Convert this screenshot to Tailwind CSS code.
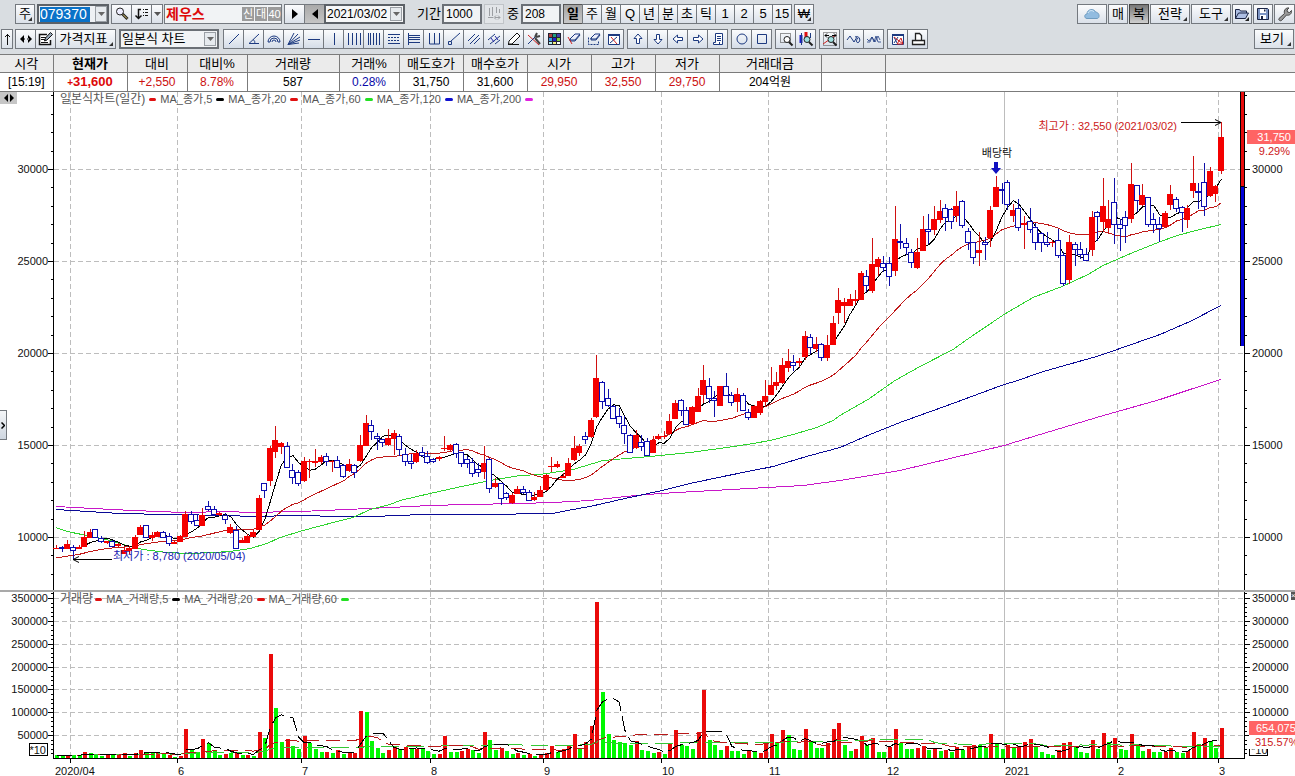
<!DOCTYPE html>
<html lang="ko">
<head>
  <meta charset="UTF-8">
  <meta name="viewport" content="width=device-width, initial-scale=1.0">
  <title>제우스 079370 - 종합차트</title>
  <script src="https://cdn.jsdelivr.net/npm/@tailwindcss/browser@4"></script>
</head>
<body class="flex h-screen flex-col overflow-hidden bg-white font-['Liberation_Sans','Noto_Sans_CJK_KR',sans-serif] text-[13px] leading-4 text-black">

  <header class="flex flex-col gap-[5px] bg-[#d9dde1] pt-1 pb-[5px]">
    <!-- symbol, date and period -->
    <div class="flex h-5 items-stretch pl-[15px]">
      <button class="relative w-5 border border-[#74797f] bg-linear-to-b from-[#fbfcfd] to-[#dbe1e9]">주<span class="absolute right-0.5 bottom-0.5 border-b-4 border-l-4 border-b-[#333] border-l-transparent"></span></button>
      <div class="ml-0.5 flex w-[72px] items-center border-2 border-[#5c6167] bg-[#eef1f4] pl-px">
        <input aria-label="종목코드" value="079370" class="h-[15px] w-[50px] bg-[#0a72c8] text-sm leading-4 text-white outline-none">
        <button aria-label="종목 목록" class="ml-auto flex h-full w-3 items-center justify-center border border-[#9a9fa5] bg-[#e6eaee]"><svg class="h-1 w-[7px]" viewBox="0 0 7 4"><path d="M0 0h7L3.500 4z" fill="#666"/></svg></button>
      </div>
      <button aria-label="종목 검색" class="ml-0.5 flex w-[21px] items-center justify-center border border-[#74797f] bg-linear-to-b from-[#fbfcfd] to-[#dbe1e9]"><svg class="size-4" viewBox="0 0 16 16"><circle cx="6" cy="5.500" r="3.500" fill="#eef" stroke="#222"/><path d="M8.500 8l5 5" stroke="#222" stroke-width="3"/><path d="M9 8.500l4 4" stroke="#e8d070"/></svg></button>
      <button aria-label="정렬" class="-ml-px flex w-[21px] items-center justify-center border border-[#74797f] bg-linear-to-b from-[#fbfcfd] to-[#dbe1e9]"><svg class="size-4" viewBox="0 0 16 16"><path d="M7 3.500H4.500V12M1.500 9.500l3 3 3-3" fill="none" stroke="#111" stroke-width="1.500"/><path d="M9 3.500h5M9 6.500h5M9 9.500h5" stroke="#111" stroke-dasharray="1 1 3 1"/></svg></button>
      <button aria-label="정렬 목록" class="-ml-px flex w-3 items-center justify-center border border-[#74797f] bg-linear-to-b from-[#fbfcfd] to-[#dbe1e9]"><svg class="h-1 w-[7px]" viewBox="0 0 7 4"><path d="M0 0h7L3.500 4z" fill="#555"/></svg></button>
      <div class="ml-px flex w-[118px] items-center gap-px border border-[#74797f] bg-[#f1f3f5] pl-px">
        <strong class="mr-auto text-sm leading-4 text-[#dd0808]">제우스</strong>
        <span class="w-3 bg-[#9b9b9b] text-center text-[11px] leading-[14px] text-white">신</span>
        <span class="w-3 bg-[#9b9b9b] text-center text-[11px] leading-[14px] text-white">대</span>
        <span class="w-[13px] bg-[#9b9b9b] text-center text-[11px] leading-[14px] text-white">40</span>
      </div>
      <button aria-label="다음 종목" class="ml-0.5 flex w-[21px] items-center justify-center border border-[#74797f] bg-linear-to-b from-[#fbfcfd] to-[#dbe1e9]"><svg class="h-2.5 w-1.5" viewBox="0 0 6 10"><path d="M0 0v10l6-5z"/></svg></button>
      <button aria-label="이전 종목" class="-ml-px flex w-[21px] items-center justify-center border border-[#74797f] bg-linear-to-b from-[#a9a9a9] to-[#c4c4c4]"><svg class="h-2.5 w-1.5" viewBox="0 0 6 10"><path d="M6 0v10L0 5z"/></svg></button>
      <div class="relative -ml-px w-[81px]">
        <select aria-label="기준일" class="h-5 w-full appearance-none border-2 border-[#5c6167] bg-[#f6f7f8] pl-px text-xs">
          <option>2021/03/02</option>
        </select>
        <span class="pointer-events-none absolute top-[3px] right-[3px] flex h-3.5 w-3 items-center justify-center border border-[#9a9fa5] bg-[#e6eaee]"><svg class="h-1 w-[7px]" viewBox="0 0 7 4"><path d="M0 0h7L3.500 4z" fill="#666"/></svg></span>
      </div>
      <label for="period" class="ml-3 w-[25px] self-center">기간</label>
      <input id="period" value="1000" class="w-10 border-2 border-[#6b7076] bg-[#f1f3f5] pl-0.5 text-xs outline-none">
      <button aria-label="봉 간격" class="ml-0.5 flex w-5 items-center justify-center border border-[#c0c4c8] bg-[#e2e5e8]"><svg class="size-4 shrink-0" viewBox="0 0 16 16" fill="none" stroke="#9c9fa3"><path d="M3.500 2v8M6.500 1v9M10.500 1v6M13.500 3v4M2 11.500h5M9 11.500h5M10 9.500l-2 2 2 2M12 9.500l2 2-2 2"/></svg></button>
      <label for="count" class="ml-[3px] w-3.5 self-center">중</label>
      <input id="count" value="208" class="w-10 border-2 border-[#6b7076] bg-[#f1f3f5] pl-0.5 text-xs outline-none">
      <div id="periods" class="ml-0.5 flex"></div>
      <button class="relative ml-0.5 w-5 border border-[#74797f] bg-linear-to-b from-[#fbfcfd] to-[#dbe1e9]">₩<span class="absolute right-0.5 bottom-0.5 border-b-4 border-l-4 border-b-[#333] border-l-transparent"></span></button>

      <div class="ml-auto flex gap-px">
        <button aria-label="클라우드" class="flex w-[30px] items-center justify-center border border-[#74797f] bg-linear-to-b from-[#fbfcfd] to-[#dbe1e9]"><svg class="h-3 w-4" viewBox="0 0 16 12"><path d="M3 10.500C0 10.500 0 6 3 6c0-5 7-6 8.500-2C16 4.500 16 10.500 13 10.500z" fill="#92bce0" stroke="#6f9cc0"/><path d="M4 5c1-3 5-3 6-1" fill="none" stroke="#d8ebf8"/></svg></button>
        <button class="w-5 border border-[#74797f] bg-linear-to-b from-[#fbfcfd] to-[#dbe1e9]">매</button>
        <button class="w-5 border border-[#444] bg-linear-to-b from-[#787878] to-[#cfcfcf]">복</button>
        <button class="relative w-10 border border-[#74797f] bg-linear-to-b from-[#fbfcfd] to-[#dbe1e9]">전략<span class="absolute right-0.5 bottom-0.5 border-b-4 border-l-4 border-b-[#333] border-l-transparent"></span></button>
        <button class="relative w-10 border border-[#74797f] bg-linear-to-b from-[#fbfcfd] to-[#dbe1e9]">도구<span class="absolute right-0.5 bottom-0.5 border-b-4 border-l-4 border-b-[#333] border-l-transparent"></span></button>
        <button aria-label="열기" class="flex w-5 items-center justify-center border border-[#74797f] bg-linear-to-b from-[#fbfcfd] to-[#dbe1e9]"><svg class="size-4 shrink-0" viewBox="0 0 16 16"><path d="M1.500 12.500v-9h4l1 1.500h6v2M1.500 12.500l3-5.500h10l-3 5.500z" fill="#aebfe4" stroke="#1a2444"/><path d="M11 15h4v-4z" fill="#222"/></svg></button>
        <button aria-label="저장" class="flex w-5 items-center justify-center border border-[#74797f] bg-linear-to-b from-[#fbfcfd] to-[#dbe1e9]"><svg class="size-4 shrink-0" viewBox="0 0 16 16"><path d="M2.500 2.500h10l1 1v10h-11z" fill="#7d95c4" stroke="#1a2444"/><path d="M5 3h6v4H5zM5 9h6v4H5z" fill="#fff"/><path d="M9 3.500h1.500v2H9zM6 10h2v3H6z" fill="#1a2444"/></svg></button>
        <button aria-label="환경설정" class="flex w-[21px] items-center justify-center border border-[#74797f] bg-linear-to-b from-[#fbfcfd] to-[#dbe1e9]"><svg class="size-4" viewBox="0 0 16 16"><path d="M2 12.500l5.500-5C6.500 4 9 1.500 12 2L10 4l.5 2 2 .5L14.500 4.500c.5 3-2 5.500-5 4.500L4.500 14.500c-1.500 1-3.500-1-2.500-2z" fill="#999" stroke="#444"/></svg></button>
      </div>
    </div>

    <!-- drawing tools -->
    <div class="flex h-5 items-stretch pl-px">
      <button aria-label="위로" class="flex w-3 items-center justify-center border border-[#74797f] bg-linear-to-b from-[#fbfcfd] to-[#dbe1e9]"><svg class="h-3 w-[7px]" viewBox="0 0 7 12"><path d="M3.500 12V1M1 4l2.500-2.500L6 4" fill="none" stroke="#111"/></svg></button>
      <button aria-label="좌우 이동" class="ml-0.5 flex w-[21px] items-center justify-center border border-[#74797f] bg-linear-to-b from-[#fbfcfd] to-[#dbe1e9]"><svg class="h-2 w-3" viewBox="0 0 12 8"><path d="M4 0v8L0 4zM8 0v8l4-4zM3 3.500h2v1H3zM7 3.500h2v1H7z"/></svg></button>
      <button aria-label="편집" class="-ml-px flex w-[21px] items-center justify-center border border-[#74797f] bg-linear-to-b from-[#fbfcfd] to-[#dbe1e9]"><svg class="size-4" viewBox="0 0 16 16"><path d="M9 3.500H1.500v10h11V9" fill="#fff" stroke="#111" stroke-width="1.500"/><path d="M3 6.500h5M3 8.500h4M3 11.500h7" stroke="#111"/><path d="M6.500 10l1-3 5-5.500 2 2-5.500 5.500z" fill="#9ab" stroke="#111"/></svg></button>
      <button class="relative -ml-px w-[61px] border border-[#74797f] bg-linear-to-b from-[#fbfcfd] to-[#dbe1e9] pr-1">가격지표<span class="absolute right-0.5 bottom-0.5 border-b-4 border-l-4 border-b-[#333] border-l-transparent"></span></button>
      <div class="relative ml-[3px] w-[100px]">
        <select aria-label="차트 종류" class="h-5 w-full appearance-none border-2 border-[#6b7076] bg-[#f1f3f5] pl-px leading-4">
          <option>일본식 차트</option>
        </select>
        <span class="pointer-events-none absolute top-[3px] right-[3px] flex h-3.5 w-3 items-center justify-center border border-[#9a9fa5] bg-[#e6eaee]"><svg class="h-1 w-[7px]" viewBox="0 0 7 4"><path d="M0 0h7L3.500 4z" fill="#666"/></svg></span>
      </div>
      <div class="ml-1 flex gap-[3px]">
        <div class="flex pl-px" data-tools="line angle arcs fan hline vline cycle fibtime fiblevel levels fork ray parallel channel pencil settings palette eraser eraseArea clear"></div>
        <div class="flex pl-px" data-tools="up down left right note"></div>
        <div class="flex pl-px" data-tools="circle square"></div>
        <div class="flex pl-px" data-tools="zoomArea zoomCandle"></div>
        <div class="flex pl-px" data-tools="zoomAll"></div>
        <div class="flex pl-px" data-tools="wave zigzag"></div>
        <div class="flex pl-px" data-tools="removeChart print"></div>
      </div>
      <button class="relative ml-auto mr-px w-10 border border-[#74797f] bg-linear-to-b from-[#fbfcfd] to-[#dbe1e9] pr-1">보기<span class="absolute right-0.5 bottom-0.5 border-b-4 border-l-4 border-b-[#333] border-l-transparent"></span></button>
    </div>
  </header>

  <!-- quote -->
  <table class="w-full table-fixed border-collapse border-y border-[#7b7b7b] text-center text-xs leading-4">
    <colgroup>
      <col class="w-[53px]"><col class="w-[74px]"><col class="w-[60px]"><col class="w-[60px]"><col class="w-[92px]"><col class="w-[60px]">
      <col class="w-[64px]"><col class="w-[64px]"><col class="w-[64px]"><col class="w-[64px]"><col class="w-[64px]"><col class="w-[102px]"><col class="w-[64px]"><col>
    </colgroup>
    <thead>
      <tr class="h-[18px] divide-x divide-[#7b7b7b] border-b border-[#7b7b7b] bg-[#ebebeb] text-[13px] *:p-0 *:font-normal">
        <th>시각</th><th><b>현재가</b></th><th>대비</th><th>대비%</th><th>거래량</th><th>거래%</th><th>매도호가</th><th>매수호가</th><th>시가</th><th>고가</th><th>저가</th><th>거래대금</th><th></th><th></th>
      </tr>
    </thead>
    <tbody>
      <tr class="h-[19px] divide-x divide-[#7b7b7b] *:p-0">
        <td>[15:19]</td>
        <td class="text-[13px] font-bold text-[#dd0808]"><span class="text-[10px]">+</span>31,600</td>
        <td class="text-[#cc1111]">+2,550</td>
        <td class="text-[#cc1111]">8.78%</td>
        <td>587</td>
        <td class="text-[#0808a8]">0.28%</td>
        <td>31,750</td>
        <td>31,600</td>
        <td class="text-[#cc1111]">29,950</td>
        <td class="text-[#cc1111]">32,550</td>
        <td class="text-[#cc1111]">29,750</td>
        <td>204억원</td>
        <td></td><td></td>
      </tr>
    </tbody>
  </table>

  <main class="relative flex min-h-0 flex-1 flex-col text-[11px]">
    <section class="relative min-h-0 flex-1">
      <svg id="price" class="absolute inset-0 size-full"></svg>
      <div class="absolute top-px left-[60px] flex items-center leading-3 text-[#555]">
        <span class="text-xs leading-3">일본식차트(일간)</span>
        <i class="mx-1 h-[3px] w-[7px] rounded-full bg-[#e01010]"></i>MA_종가,5
        <i class="mx-1 h-[3px] w-2 rounded-full bg-black"></i>MA_종가,20
        <i class="mx-1 h-[3px] w-2 rounded-full bg-[#e01010]"></i>MA_종가,60
        <i class="mx-1 h-[3px] w-2 rounded-full bg-[#22e022]"></i>MA_종가,120
        <i class="mx-1 h-[3px] w-2 rounded-full bg-[#1010d0]"></i>MA_종가,200
        <i class="mx-1 h-[3px] w-2 rounded-full bg-[#e020e0]"></i>
      </div>
      <button aria-label="차트 이동" class="absolute top-0 left-0 flex h-3 w-[17px] items-center justify-center bg-[#c6c6c6]"><svg class="h-2 w-3" viewBox="0 0 12 8"><path d="M5 0v8L1 4zM7 0v8l4-4z"/></svg></button>
    </section>
    <section class="relative h-[186px] border-t-2 border-[#a9a9a9]">
      <svg id="volume" class="absolute inset-0 size-full"></svg>
      <div class="absolute top-0 left-[60px] flex items-center leading-[14px] text-[#555]">
        <span class="text-xs leading-[14px]">거래량</span>
        <i class="mr-1 ml-0.5 h-[3px] w-[7px] rounded-full bg-[#e01010]"></i>MA_거래량,5
        <i class="mx-1 h-[3px] w-2 rounded-full bg-black"></i>MA_거래량,20
        <i class="mx-1 h-[3px] w-2 rounded-full bg-[#e01010]"></i>MA_거래량,60
        <i class="mx-1 h-[3px] w-2 rounded-full bg-[#22e022]"></i>
      </div>
      <button aria-label="지표 닫기" class="absolute top-0 right-0 h-2 w-1 overflow-hidden bg-[#555] text-[8px] leading-2 text-white">×</button>
    </section>
    <button aria-label="메뉴 펼치기" class="absolute top-[318px] left-0 flex h-[30px] w-[7px] items-center justify-center border border-l-0 border-[#74797f] bg-linear-to-b from-[#f4f6f8] to-[#ced6e0]"><svg class="h-[7px] w-1" viewBox="0 0 4 7"><path d="M.5.5l3 3-3 3" fill="none" stroke="#000" stroke-width="1.500"/></svg></button>
  </main>

  <script>
    // period buttons
    document.getElementById('periods').innerHTML = ['일', '주', '월', 'Q', '년', '분', '초', '틱', '1', '2', '5', '15'].map((p, i) =>
      i === 0
        ? `<button class="w-5 border border-[#555] bg-linear-to-b from-[#a4a4a4] to-[#c8c8c8] font-bold">${p}</button>`
        : `<button class="-ml-px w-5 border border-[#74797f] bg-linear-to-b from-[#fbfcfd] to-[#dbe1e9]">${p}</button>`
    ).join('');

    // toolbar icons, 16x16
    const lens = '<circle cx="9" cy="8.500" r="3" fill="#9fe0e0" stroke="#222"/><path d="M11 11l3.500 3.500" stroke="#222" stroke-width="2"/>';
    const icons = {
      line: '<path d="M3 13L13 3"/>',
      angle: '<path d="M13 3L3 12.500h10M7 8.500c2 1 2 3 1.500 4"/>',
      arcs: '<path d="M2 11a6 6 0 0 1 12 0M4 11a4 4 0 0 1 8 0M6 11a2 2 0 0 1 4 0M2 11h2M12 11h2"/>',
      fan: '<path d="M2 13.500L8 2M2 13.500L12 3M2 13.500L14 6M2 13.500L14 9M2 13.500L13 12"/>',
      hline: '<path d="M2 8.500h12"/>',
      vline: '<path d="M8.500 2v12"/>',
      cycle: '<path d="M2.500 2v12M6.500 2v12M10.500 2v12M14.500 2v12"/>',
      fibtime: '<path d="M2.500 2v12M4.500 2v12M7.500 2v12M10.500 2v12M13.500 2v12"/>',
      fiblevel: '<path d="M2 3.500h12M2 12.500h12"/><path d="M2 6.500h12M2 9.500h12" stroke-dasharray="2 1"/>',
      levels: '<path d="M2.500 2v12M3 4.500h11M3 6.500h11M3 8.500h11M3 11.500h11"/>',
      fork: '<path d="M3.500 2v11h10V2M8.500 2v11"/>',
      ray: '<path d="M5 10l9-8"/><path d="M2.500 10.500h3v3h-3z"/>',
      parallel: '<path d="M2 10l7-7M4 13l9-9M8 13l6-6"/>',
      channel: '<path d="M2 9l7-6M4 13l10-8M9 13l5-4"/><path d="M5 7l3 4M9 5l3 4" stroke="#2222aa"/>',
      pencil: '<path d="M3 10l8-8 3 3-8 8H2.500z" fill="#fff" stroke="#111"/><path d="M2 13.500h11" stroke="#111"/>',
      settings: '<path d="M2 4l11 10" stroke="#d02020"/><path d="M2 13l8-8"/><path d="M9 6l2-4M10 6l4-1M9 7l5 6" stroke="#444" stroke-width="2"/>',
      palette: '<g stroke="none"><path d="M2 2h13v12H2z" fill="#223"/><path d="M3 3h3v3H3z" fill="#b04040"/><path d="M7 3h3v3H7z" fill="#20a080"/><path d="M11 3h3v3h-3z" fill="#4040b0"/><path d="M3 7h3v3H3z" fill="#40a0e0"/><path d="M7 7h3v3H7z" fill="#2020d0"/><path d="M11 7h3v3h-3z" fill="#80d040"/><path d="M3 11h3v2H3z" fill="#b0f0f0"/><path d="M7 11h3v2H7z" fill="#f0f080"/><path d="M11 11h3v2h-3z" fill="#fff"/></g>',
      eraser: '<path d="M4 8l5-5h5l-5 6H4zM4 8v2h5l5-6" fill="#eef"/><path d="M2 6l4 7" stroke="#d02020"/>',
      eraseArea: '<path d="M2.500 6.500v7h10v-4" stroke-dasharray="2 1"/><path d="M5 7l4-4h5l-4 5H5zM5 7v2h5l4-5" fill="#eef"/>',
      clear: '<path d="M2.500 3.500h11v10h-11z" fill="#fff"/><path d="M2 4h12" stroke-width="2"/><path d="M4 12l7-6" /><path d="M5 6l6 7" stroke="#d02020"/>',
      up: '<path d="M8 3l4 4.500h-2.500v5h-3v-5H4z" fill="#fff"/>',
      down: '<path d="M8 13L4 8.500h2.500v-5h3v5H12z" fill="#fff"/>',
      left: '<path d="M3 8l4.500-4v2.500h5v3h-5V12z" fill="#fff"/>',
      right: '<path d="M13 8L8.500 4v2.500h-5v3h5V12z" fill="#fff"/>',
      note: '<path d="M5.500 2.500h7v11h-9v-2h2zM7 5.500h4M7 7.500h4M7 9.500h4M9.500 13v-2" fill="#fff"/>',
      circle: '<circle cx="8" cy="8" r="5"/>',
      square: '<path d="M3.500 3.500h9v9h-9z"/>',
      zoomArea: '<path d="M2.500 2.500h10v9h-10z" stroke="#333" stroke-dasharray="1 1"/>' + lens.replace('#9fe0e0', '#fff'),
      zoomCandle: '<path d="M3 4v8" stroke="#2020d0" stroke-width="3"/><path d="M8 1v6" stroke="#e01010" stroke-width="3"/><path d="M3.500 2v12M12.500 2v5" />' + lens,
      zoomAll: '<path d="M1.500 1.500h13v13h-13z" stroke="#444" stroke-dasharray="1 1"/><path d="M1 13L14 4" stroke="#d02020"/><path d="M3 4.500h4M10 4.500h4M5 2.500l-2 2 2 2M12 2.500l2 2-2 2" stroke="#000"/>' + lens,
      wave: '<path d="M1 9l3-4 4 6 3-5M9 6c4-2 6 3 4 5s-4-1-1-4"/>',
      zigzag: '<path d="M1 11h3l2-5 2 5 2-6 2 6h3M1 8l2 2 3-4 3 5 3-6 2 4" stroke-width=".8"/>',
      removeChart: '<path d="M2.500 3.500h11v10h-11z" fill="#fff"/><path d="M2 4h12" stroke-width="2"/><path d="M4 6l3 6M8 6l-4 6"/><path d="M7 13l4-6 2 6zM4 6l9 7" stroke="#d02020"/>',
      print: '<path d="M5.500 9V2.500h4l2 2V9M2.500 9.500h12v4h-12z" fill="#fff" stroke="#222" stroke-width="1.300"/>'
    };
    document.querySelectorAll('[data-tools]').forEach(group => {
      group.innerHTML = group.dataset.tools.split(' ').map(name =>
        `<button aria-label="${name}" class="-ml-px flex w-[21px] items-center justify-center border border-[#74797f] bg-linear-to-b from-[#fbfcfd] to-[#d5dde8]"><svg class="size-4" viewBox="0 0 16 16" fill="none" stroke="#1d3a80">${icons[name]}</svg></button>`
      ).join('');
    });

    // one candle per entry: u(p)/d(own), then high, body top, body bottom, low
    const candles = `
      u545,548,549,549 d546,547,548,552 u540,544,549,549 d545,547,550,559 u545,547,549,549 u531,537,547,547 u529,532,538,538 d529,529,537,537
      d536,538,541,543 u541,541,543,544 d540,541,546,547 u543,544,546,547 u547,550,554,554 u546,548,551,554 u535,537,549,549 u525,527,535,535
      d525,525,537,538 u532,535,538,541 u531,532,537,537 d531,532,537,538 d533,536,543,546 u541,542,544,544 u535,536,542,542 u511,514,537,537
      d511,514,521,524 d515,520,525,526 u508,515,526,526 d501,506,509,511 d506,509,514,515 u512,513,515,516 d513,515,519,524 u524,527,533,534
      d526,530,548,549 u538,540,543,543 u534,536,543,543 u530,532,537,537 u495,498,530,530 d483,483,490,498 u446,448,481,486 u426,440,452,458
      u442,443,447,454 d442,446,467,468 d464,470,477,484 d470,472,483,486 u457,461,481,482 u459,461,462,478 u449,461,463,467 u455,457,462,464
      d453,456,461,466 u460,461,462,472 d456,460,467,468 d464,465,476,478 u459,464,471,472 d464,465,472,478 u435,445,461,462 u415,423,446,446
      d420,425,431,440 d433,436,438,450 d439,439,442,447 u429,438,445,446 u430,433,439,455 d434,436,449,456 d448,454,461,466 d454,461,463,469
      u450,453,462,463 d447,452,455,457 d451,456,462,464 d458,459,461,463 u456,457,459,461 u436,448,449,451 u444,445,450,451 d443,444,453,458
      d452,452,463,467 d456,459,463,468 d458,462,473,477 d463,469,472,477 u446,463,472,479 d458,459,488,493 u478,483,487,488 d483,483,498,505
      d492,493,497,500 u493,495,503,504 u486,489,494,494 d486,489,492,494 d490,492,500,501 u492,497,500,501 u486,490,497,497 u474,475,490,491
      u457,466,467,472 u461,464,467,468 u473,476,478,478 u458,463,476,476 u436,448,460,461 u444,446,453,456 d432,436,439,444 u418,420,437,438
      u355,378,417,418 d381,382,401,409 d389,398,405,407 d405,406,418,419 d408,416,423,428 d416,425,433,444 d434,435,452,453 u430,435,448,449
      d435,442,446,451 d438,441,455,456 u436,440,453,453 u434,436,439,440 u431,436,437,439 u414,421,434,434 u400,403,419,419 d399,400,410,416
      d407,410,424,424 u406,407,424,424 u388,396,412,412 u365,380,395,403 d378,386,398,403 d391,398,400,417 u386,386,406,406 d373,386,395,396
      d392,395,402,406 u388,394,402,412 d393,395,410,410 d409,412,417,420 u405,406,418,418 u400,401,413,415 u380,396,402,407 u367,385,395,395
      u372,382,386,390 u358,365,383,384 u349,361,368,372 d355,362,365,371 u358,361,363,367 u331,336,357,360 d334,337,347,354 u337,344,349,352
      d343,344,357,361 u335,345,358,361 u316,323,345,345 u288,300,313,324 u298,302,306,323 u294,299,306,306 u290,299,301,305 u271,273,300,300
      d270,276,285,292 u238,264,291,293 u257,259,267,276 d256,263,267,272 d257,263,276,286 u206,239,271,276 d224,241,242,249 d238,243,247,255
      d249,252,262,268 u238,252,268,269 u216,229,251,251 d214,229,231,244 u206,219,230,235 u200,211,220,223 d204,208,217,231 d208,209,221,229
      u191,206,216,222 d200,201,225,228 d228,231,242,250 d242,242,257,264 u232,250,253,266 d237,242,244,260 u206,210,238,247 u176,187,207,207
      d183,189,190,204 d180,182,204,210 u204,210,216,222 d199,208,227,231 u216,223,225,249 d208,221,229,233 d223,227,242,250 d232,233,242,252
      d232,242,244,247 u240,242,243,247 d229,240,255,258 d252,255,283,286 u235,242,280,284 d242,244,249,266 d242,249,254,259 d248,254,260,260
      u211,217,250,256 d211,212,216,241 u178,206,222,232 u200,219,228,233 d178,202,224,244 d219,224,228,251 d211,217,225,243 u163,184,219,223
      d185,185,200,212 u184,195,205,206 d197,197,224,227 d213,219,224,233 d217,224,228,242 u211,213,227,228 u185,194,205,210 d197,199,208,212
      d206,207,212,232 u205,208,220,228 u156,183,191,198 d183,191,192,209 d163,182,206,216 u167,171,196,197 u185,186,194,202 u122,137,171,174`
      .trim().split(/\s+/).map(s => [s[0], ...s.slice(1).split(',').map(Number)]);

    // bar heights, r(ed)/g(reen)
    const volumes = `
      g3 g3 r2 g3 g3 r6 g5 g3 g2 r3 g3 r3 r5 g2 r5 r8 g6 g6 r5 g5 r3 g1 r2 r29 g8 g6 r19 g15 g7 g3 r4 g5 r6 g3 r3 g2 r26 g20 r104 g50
      g16 r19 g12 g9 r22 g15 g9 g6 r6 g5 r8 g4 r5 r5 r47 g46 g17 g10 g5 r8 r12 g9 r11 g9 r9 g10 g7 g4 r4 r22 g6 g6 r7 r9 g8 g5 r26 g18 g8 r10
      g7 g4 r5 g3 r4 g2 r4 r5 r12 g6 r9 r12 r24 g10 r16 r32 r156 g66 g24 g18 g16 g15 g13 r17 g8 g7 g5 r6 g4 r15 r28 g13 g12 g9 r26 r68 g18 g13 g8 r12
      g7 g7 g4 r8 g6 r5 r14 r24 g16 r28 g23 g9 g8 r29 g17 g10 g10 r15 r29 r35 g13 g7 r9 r22 g13 r20 g6 g6 r11 r29 g15 g9 g9 r10 r12 g8 r9 g7 r8 g6
      r11 g8 r12 r13 g13 g10 r24 g14 g9 r13 g10 r12 r16 r19 g11 g6 g4 g3 r8 r15 r16 g11 g6 g5 r18 g9 r25 g16 r20 g9 g8 r24 g14 g7 r9 g6 g6 r6 r10 g6
      g5 r7 r26 g14 r20 g17 g10 r30`.trim().split(/\s+/).map(s => [s[0], Number(s.slice(1))]);

    const ma60 = [[56,527],[67,531],[87,535],[110,540],[127,545],[143,549],[167,552],[187,553],[213,552],[230,551],[250,548],[267,543],[280,537],[303,530],[337,521],[353,517],[370,509],[390,504],[400,500],[430,493],[457,487],[490,480],[520,475],[540,474],[573,469],[603,460],[650,456],[690,452],[727,447],[753,443],[770,440],[793,434],[817,427],[833,420],[840,415],[868,399],[895,380],[920,366],[953,349],[967,339],[1004,314],[1033,297],[1062,286],[1088,274],[1103,265],[1133,252],[1158,242],[1177,235],[1200,229],[1221,224]];
    const ma120 = [[56,509],[120,513],[167,514],[230,515],[250,516],[300,515],[340,516],[373,516],[423,514],[510,514],[523,513],[553,513],[567,510],[590,506],[625,498],[662,490],[690,483],[723,476],[773,466],[810,455],[840,447],[870,434],[900,422],[950,404],[1004,384],[1018,380],[1040,372],[1100,355],[1160,334],[1190,321],[1221,305]];
    const ma200 = [[56,506],[93,508],[133,510],[183,512],[230,511],[247,512],[300,511],[347,509],[390,507],[430,505],[467,504],[520,503],[553,502],[590,500],[625,496],[660,493],[713,490],[767,487],[803,485],[840,480],[900,470],[950,458],[1004,445],[1040,434],[1100,416],[1160,399],[1190,389],[1221,379]];
    const months = [[70,'2020/04',55],[177,'6'],[301,'7'],[430,'8'],[543,'9'],[661,'10'],[768,'11'],[886,'12'],[1004,'2021'],[1117,'2'],[1218,'3']];

    function average(values, n) {
      return values.map((_, i) => {
        const part = values.slice(Math.max(0, i - n + 1), i + 1);
        return part.reduce((a, b) => a + b, 0) / part.length;
      });
    }

    const rect = (x, y, w, h, fill) => `<rect x="${x}" y="${y}" width="${w}" height="${h}" fill="${fill}"/>`;
    const text = (x, y, s, fill = '#111', anchor = 'start', size = 11) => `<text x="${x}" y="${y}" fill="${fill}" text-anchor="${anchor}" font-size="${size}">${s}</text>`;
    const poly = (pts, color, dash = 'none') => `<polyline points="${pts.map(p => p.join(',')).join(' ')}" fill="none" stroke="${color}" stroke-dasharray="${dash}"/>`;
    const grid = (x1, y1, x2, y2, solid) => `<path d="M${x1} ${y1}L${x2} ${y2}" stroke="#bdbdbd" ${solid ? '' : 'stroke-dasharray="5 3"'}/>`;

    function draw() {
      const price = document.getElementById('price');
      const volume = document.getElementById('volume');
      const W = price.parentElement.clientWidth, H = price.parentElement.clientHeight;
      const right = W - 51;
      const X = v => 54 + (v - 54) * (right - 54) / 1190;
      const cx = i => X(56.5 + i * 5.628);
      const Y = v => Math.round((v - 92) * H / 498);
      let s = '<g shape-rendering="crispEdges">';

      // price grid and axes
      months.forEach(m => { s += grid(Math.round(X(m[0])) + .5, 0, Math.round(X(m[0])) + .5, H, m[1] === '2021'); });
      for (let p = 30000, y = 169; p >= 10000; p -= 5000, y += 92) s += grid(54, Y(y) + .5, right, Y(y) + .5);
      s += rect(53, 0, 1, H, '#000') + rect(right, 0, 1, H, '#000');
      for (let k = 8; k <= 34; k++) {
        const y = Y(169 + (30 - k) * 18.4), major = k % 5 === 0;
        s += rect(major ? 48 : 51, y, major ? 6 : 3, 1, '#000') + rect(right, y, major ? 6 : 3, 1, '#000');
      }
      s += rect(right - 4, 0, 5, Y(346), '#000') + rect(right - 3, 0, 3, Y(186), '#e80c0c') + rect(right - 3, Y(187), 3, Y(346) - Y(187), '#0000d8');

      // averages under the candles
      const at = pts => pts.map(([x, y]) => [X(x).toFixed(1), ((y - 92) * H / 498 + .5).toFixed(1)]);
      const closes = candles.map(c => c[0] === 'u' ? c[2] : c[3]);
      const seed = Array.from({ length: 19 }, (_, i) => 567 - i);
      const line = vals => vals.map((v, i) => [cx(i).toFixed(1), ((v - 92) * H / 498 + .5).toFixed(1)]);
      s += poly(at(ma200), '#c817c8') + poly(at(ma120), '#0a0a96') + poly(at(ma60), '#2fd42f');
      s += poly(line(average(seed.concat(closes), 20).slice(19)), '#c01818');
      s += poly(line(average(closes, 5)), '#000');

      candles.forEach(([dir, hi, top, bottom, lo], i) => {
        const x = Math.floor(cx(i)), y1 = Y(top), h = Math.max(Y(bottom) - y1, 1);
        const color = dir === 'u' ? '#d01010' : '#1010a8';
        s += rect(x, Y(hi), 1, Math.max(Y(lo) - Y(hi), 1), color);
        if (dir === 'u') s += rect(x - 3, y1, 6, h, '#f40000');
        else s += `<rect x="${x - 2.5}" y="${y1 + .5}" width="5" height="${h}" fill="#fff" stroke="#0c0cb0"/>`;
      });
      s += '</g>';

      // high, low and ex-dividend marks
      s += text(X(1177), Y(130), '최고가 : 32,550 (2021/03/02)', '#cc1818', 'end');
      s += `<path d="M${X(1181)} ${Y(122) + .5}H${X(1221)}m-6 -3l6 3l-6 3" fill="none" stroke="#000"/>`;
      s += text(X(113), Y(560), '최저가 : 8,780 (2020/05/04)', '#2020b0');
      s += `<path d="M${X(112)} ${Y(559) + .5}H${X(73)}m6 -3l-6 3l6 3" fill="none" stroke="#000"/>`;
      s += text(X(997), Y(157), '배당락', '#111', 'middle');
      s += `<path d="M${X(996)} ${Y(174)}l-5 -6h3v-6h4v6h3z" fill="#1010c0"/>`;

      for (let p = 30000, y = 169; p >= 10000; p -= 5000, y += 92) {
        s += text(48, Y(y) + 4, p, '#111', 'end') + text(right + 8, Y(y) + 4, p);
      }
      s += rect(right + 3, Y(130), 48, 14, '#ff6464') + text(right + 47, Y(141), '31,750', '#fff', 'end') + text(right + 46, Y(155), '9.29%', '#cc1818', 'end');
      price.innerHTML = s;

      // volume panel
      const base = 166;
      s = '<g shape-rendering="crispEdges">';
      months.forEach(m => { s += grid(Math.round(X(m[0])) + .5, 0, Math.round(X(m[0])) + .5, base, m[1] === '2021'); });
      for (let k = 1; k <= 7; k++) s += grid(54, Math.round(base - k * 22.86) + .5, right, Math.round(base - k * 22.86) + .5);
      s += rect(53, 0, 1, base, '#000') + rect(right, 0, 1, base, '#000') + rect(53, base, right - 52, 1, '#000');
      for (let k = 1; k <= 36; k++) {
        const y = Math.round(base - k * 4.572), major = k % 5 === 0;
        s += rect(major ? 48 : 51, y, major ? 6 : 3, 1, '#000') + rect(right, y, major ? 6 : 3, 1, '#000');
      }
      volumes.forEach(([c, h], i) => { s += rect(Math.floor(cx(i)) - 1, base - h, 4, h, c === 'r' ? '#ea0a0a' : '#00f800'); });
      const heights = volumes.map(v => v[1]);
      const vline = n => average(heights, n).map((v, i) => [cx(i).toFixed(1), (base - v).toFixed(1)]);
      s += poly(vline(60), '#35c835', '18 7') + poly(vline(20), '#b81818', '14 7') + poly(vline(5), '#000', '16 6');
      months.forEach(m => { s += rect(Math.round(X(m[0])), base, 1, 5, '#000'); });
      s += '</g>';
      for (let k = 1; k <= 7; k++) {
        const y = Math.round(base - k * 22.86) + 4;
        s += text(48, y, k * 50000, '#111', 'end');
        if (k > 1) s += text(right + 8, y, k * 50000);
      }
      months.forEach(m => { s += text(Math.round(X(m[2] || m[0] + 1)), base + 17, m[1]); });
      s += '<rect x="29.500" y="151.500" width="18" height="12" fill="#fff" stroke="#000"/>' + text(46, 162, '*10', '#111', 'end');
      s += `<rect x="${right + 5.5}" y="151.500" width="18" height="12" fill="#fff" stroke="#000"/>` + text(right + 7, 162, '*10');
      s += rect(right + 5, 129, 46, 14, '#ff6464') + text(right + 12, 140, '654,075', '#fff');
      s += rect(right + 5, 143, 46, 14, '#fff') + text(right + 11, 154, '315.57%', '#cc1818');
      volume.innerHTML = s;
    }

    draw();
    new ResizeObserver(draw).observe(document.getElementById('price').parentElement);
  </script>
</body>
</html>
